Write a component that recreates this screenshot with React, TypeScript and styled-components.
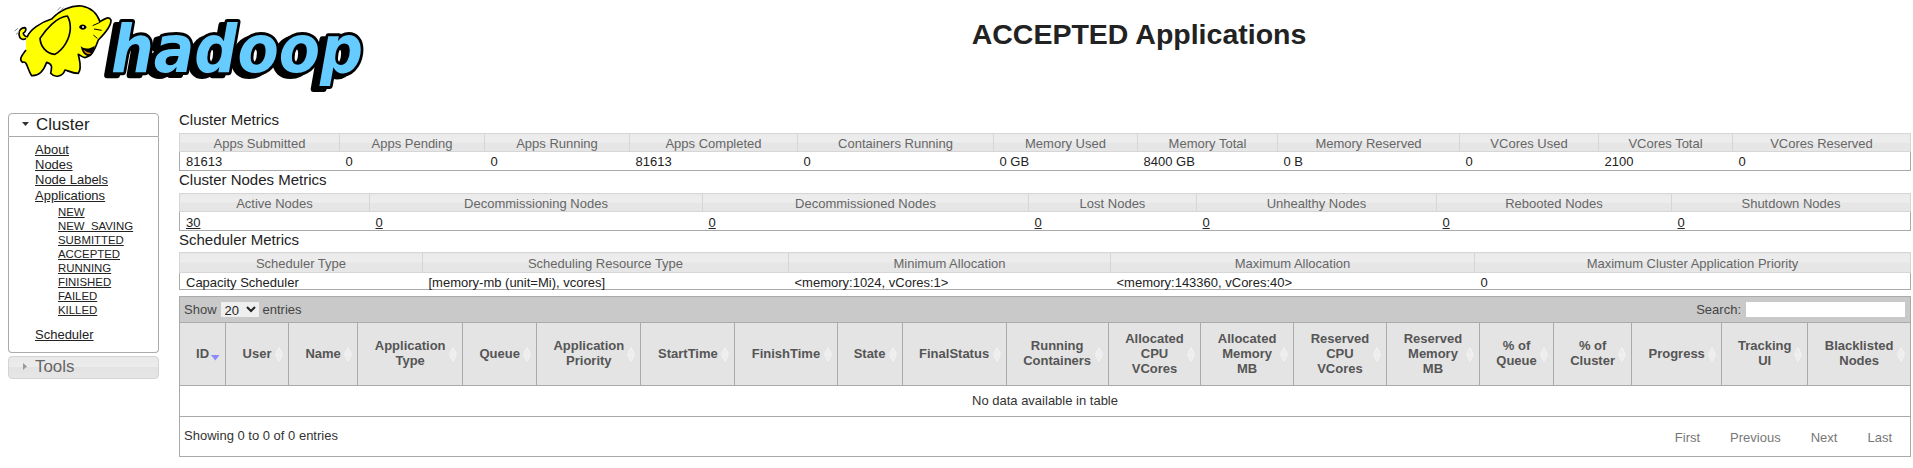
import React from 'react';
import styled, { createGlobalStyle } from 'styled-components';

const Global = createGlobalStyle`
  html, body { margin: 0; padding: 0; background: #fff; }
  body { font-family: "Liberation Sans", Arial, sans-serif; font-size: 13px; color: #222; }
  * { box-sizing: border-box; }
`;

const Page = styled.div`
  width: 1913px;
  height: 468px;
  overflow: hidden;
`;
const Header = styled.header`
  display: flex;
  height: 113px;
`;
const LogoBox = styled.div`
  flex: 0 0 365px;
  height: 100px;
`;
const Wordmark = styled.text`
  font-family: "DejaVu Sans", "Liberation Sans", sans-serif;
  font-weight: 700;
  font-style: italic;
  font-size: 66px;
  fill: #66ccff;
  stroke: #000;
  stroke-width: 6px;
  stroke-linejoin: round;
  paint-order: stroke;
  filter: drop-shadow(-6px 3px 0 #000);
`;
const Title = styled.h1`
  flex: 1;
  margin: 17px 0 0;
  height: 34px;
  line-height: 34px;
  text-align: center;
  font-size: 28.5px;
  font-weight: 700;
  color: #222;
`;
const Body = styled.div`
  display: flex;
  align-items: flex-start;
  padding: 0 3px 0 8px;
`;
const Side = styled.nav`
  flex: 0 0 151px;
  margin-right: 20px;
`;
const PanelHead = styled.div`
  display: flex;
  align-items: center;
  height: 24px;
  padding-bottom: 1px;
  border: 1px solid #aaa;
  border-radius: 4px 4px 0 0;
  font-size: 16.9px;
  color: #222;
  svg { margin: 0 6px 0 12px; }
`;
const PanelBody = styled.div`
  height: 216px;
  border: 1px solid #aaa;
  border-top: 0;
  border-radius: 0 0 4px 4px;
  padding: 5px 0 0 26px;
`;
const NavList = styled.ul`
  list-style: none;
  margin: 0;
  padding: 0;
`;
const NavItem = styled.li<{ $gap?: number }>`
  line-height: 15px;
  margin-top: ${p => p.$gap ?? 0}px;
`;
const NavLink = styled.a`
  color: #222;
  text-decoration: underline;
`;
const SubList = styled.ul`
  list-style: none;
  margin: 2px 0 0;
  padding: 0 0 0 23px;
`;
const SubItem = styled.li`
  font-size: 11.4px;
  line-height: 14px;
`;
const ToolsHead = styled.div`
  display: flex;
  align-items: center;
  height: 23px;
  margin-top: 3px;
  padding-bottom: 2px;
  border: 1px solid #d3d3d3;
  border-radius: 4px;
  background: linear-gradient(#e9e9e9 0, #ececec 50%, #e3e3e3 50%, #e6e6e6 100%);
  font-size: 16.9px;
  color: #666;
  svg { margin: 0 7px 0 14px; }
`;
const Main = styled.main`
  flex: 0 0 1731px;
`;
const SectionTitle = styled.h3<{ $h: number; $pad: number }>`
  margin: 0;
  height: ${p => p.$h}px;
  padding-bottom: ${p => p.$pad}px;
  display: flex;
  align-items: flex-end;
  font-size: 15px;
  font-weight: 400;
  line-height: 17px;
  color: #222;
`;
const InfoTable = styled.table`
  width: 100%;
  table-layout: fixed;
  border-collapse: collapse;
`;
const Col = styled.col<{ $w: number }>`
  width: ${p => p.$w}px;
`;
const InfoTh = styled.th<{ $h: number }>`
  height: ${p => p.$h}px;
  padding: 2px 0 0;
  border: 1px solid #d6d6d6;
  background: linear-gradient(#ebebeb 0, #ededed 50%, #e6e6e6 50%, #e6e6e6 100%);
  font-weight: 400;
  font-size: 13px;
  line-height: 15px;
  color: #666;
  text-align: center;
`;
const InfoRow = styled.tr`
  border-left: 1px solid #aaa;
  border-right: 1px solid #aaa;
  border-bottom: 1px solid #aaa;
`;
const InfoTd = styled.td<{ $h: number; $top: number }>`
  height: ${p => p.$h}px;
  padding: ${p => p.$top}px 6px 0;
  font-size: 13px;
  line-height: 13px;
  color: #222;
  white-space: nowrap;
`;
const CellLink = styled.a`
  color: #222;
  text-decoration: underline;
`;
const DataWrap = styled.section`
  margin-top: 6px;
  height: 161px;
  border: 1px solid #aaa;
  border-top: 0;
`;
const Toolbar = styled.div`
  display: flex;
  justify-content: space-between;
  align-items: center;
  height: 26px;
  padding: 0 5px 0 4px;
  background: #c9c9c9;
  border-top: 1px solid #aaa;
  color: #444;
`;
const Label = styled.label`
  display: flex;
  align-items: center;
`;
const PageSelect = styled.select`
  width: 38px;
  height: 15px;
  margin: 0 4px;
  padding: 0;
  border: 0;
  background: #efefef;
  font: 13px "Liberation Sans", Arial, sans-serif;
  color: #222;
`;
const SearchInput = styled.input`
  width: 159px;
  height: 15px;
  margin-left: 5px;
  padding: 0;
  border: 0;
  background: #fff;
`;
const DataTable = styled.table`
  width: 100%;
  table-layout: fixed;
  border-collapse: collapse;
`;
const DataTh = styled.th`
  position: relative;
  height: 63px;
  padding: 0 14px 2px;
  background: #e4e4e4;
  border: 1px solid #aaa;
  font-weight: 700;
  font-size: 13px;
  line-height: 15px;
  color: #555;
  text-align: center;
  &:first-child { border-left: 0; }
  &:last-child { border-right: 0; }
`;
const SortMark = styled.svg`
  position: absolute;
  right: 5px;
  top: 24px;
`;
const EmptyCell = styled.td`
  height: 31px;
  padding: 0 0 2px;
  border-bottom: 1px solid #aaa;
  text-align: center;
  color: #333;
  font-size: 13px;
`;
const Footer = styled.div`
  display: flex;
  justify-content: space-between;
  align-items: center;
  height: 39px;
  padding: 0 4px 2px;
  color: #333;
`;
const Pager = styled.div`
  display: flex;
  padding: 4px 14px 0 0;
`;
const PageLink = styled.a<{ $gap: number }>`
  margin-left: ${p => p.$gap}px;
  color: #777;
  text-decoration: none;
`;

const m1 = [160, 145, 145, 168, 196, 144, 140, 182, 139, 134, 178];
const m2 = [190, 333, 326, 168, 240, 235, 239];
const m3 = [243, 366, 322, 364, 436];
const m4 = [45.5, 63, 69, 105, 74, 104, 94, 102, 65, 104, 102, 92.5, 92.5, 93, 93, 74, 78, 90, 86, 102];

const clusterHead = ['Apps Submitted', 'Apps Pending', 'Apps Running', 'Apps Completed', 'Containers Running', 'Memory Used', 'Memory Total', 'Memory Reserved', 'VCores Used', 'VCores Total', 'VCores Reserved'];
const clusterVals = ['81613', '0', '0', '81613', '0', '0 GB', '8400 GB', '0 B', '0', '2100', '0'];
const nodeHead = ['Active Nodes', 'Decommissioning Nodes', 'Decommissioned Nodes', 'Lost Nodes', 'Unhealthy Nodes', 'Rebooted Nodes', 'Shutdown Nodes'];
const nodeVals = ['30', '0', '0', '0', '0', '0', '0'];
const schedHead = ['Scheduler Type', 'Scheduling Resource Type', 'Minimum Allocation', 'Maximum Allocation', 'Maximum Cluster Application Priority'];
const schedVals = ['Capacity Scheduler', '[memory-mb (unit=Mi), vcores]', '<memory:1024, vCores:1>', '<memory:143360, vCores:40>', '0'];
const dataHead = ['ID', 'User', 'Name', 'Application Type', 'Queue', 'Application Priority', 'StartTime', 'FinishTime', 'State', 'FinalStatus', 'Running Containers', 'Allocated CPU VCores', 'Allocated Memory MB', 'Reserved CPU VCores', 'Reserved Memory MB', '% of Queue', '% of Cluster', 'Progress', 'Tracking UI', 'Blacklisted Nodes'];
const subStates = ['NEW', 'NEW_SAVING', 'SUBMITTED', 'ACCEPTED', 'RUNNING', 'FINISHED', 'FAILED', 'KILLED'];

function Metrics({ cols, head, vals, link, headH, rowH, top }: { cols: number[]; head: string[]; vals: string[]; link?: boolean; headH: number; rowH: number; top: number }) {
  return (
    <InfoTable>
      <colgroup>{cols.map((w, i) => <Col key={i} $w={w} />)}</colgroup>
      <thead><tr>{head.map(h => <InfoTh key={h} $h={headH}>{h}</InfoTh>)}</tr></thead>
      <tbody>
        <InfoRow>
          {vals.map((v, i) => <InfoTd key={i} $h={rowH} $top={top}>{link ? <CellLink href="#">{v}</CellLink> : v}</InfoTd>)}
        </InfoRow>
      </tbody>
    </InfoTable>
  );
}

function Sort({ active }: { active?: boolean }) {
  if (active) {
    return (
      <SortMark width="9" height="15" viewBox="0 0 9 15">
        <path d="M0 8h8.500L4.250 13.500z" fill="#8a8aff" />
      </SortMark>
    );
  }
  return (
    <SortMark width="8" height="15" viewBox="0 0 8 15">
      <path d="M4 .5 7.500 7H.5z" fill="#ececec" stroke="#f8f8f8" strokeWidth=".6" />
      <path d="M.5 8h7L4 14.500z" fill="#ececec" stroke="#f8f8f8" strokeWidth=".6" />
    </SortMark>
  );
}

function Logo() {
  return (
    <svg width="365" height="100" viewBox="0 0 365 100" role="img" aria-label="hadoop">
      <Wordmark x="111" y="72" textLength="252" lengthAdjust="spacingAndGlyphs">hadoop</Wordmark>
      <g transform="translate(10 5) scale(.3333)">
        <path d="M48 100C38 108 28 100 27 88 26 76 34 68 44 68 50 70 48 80 40 85 40 90 46 95 52 95 60 75 90 52 125 42 150 15 185 0 215 3 245 8 262 28 270 50 285 40 298 33 303 45 304 60 285 85 265 105 257 125 250 152 225 158 215 156 210 150 205 148 208 165 217 190 205 205 185 205 170 195 165 195 158 215 135 220 122 205 125 190 130 178 110 172 102 195 90 214 65 212 52 195 52 165 38 172 28 165 30 158 48 135 48 100z" fill="#ffff00" stroke="#000" strokeWidth="5" strokeLinejoin="round" />
        <path d="M172 33C140 36 108 72 90 100 92 125 108 145 135 148 162 132 180 100 181 70 181 55 178 42 172 33z" fill="#ffff00" stroke="#000" strokeWidth="5" strokeLinejoin="round" />
        <path d="M212 124C216 142 226 156 240 154 250 148 252 136 254 122 240 132 226 134 212 124z" fill="#000" />
        <path d="M220 134C226 146 236 150 244 144 236 144 228 140 220 134z" fill="#ff9a00" />
        <path d="M207 66C212 56 224 56 230 66 226 76 212 78 207 66z" fill="#000" />
        <circle cx="219" cy="66" r="3" fill="#fff" />
        <path d="M248 62 270 52M252 72 275 76M250 90 262 100" stroke="#000" strokeWidth="3" fill="none" />
        <path d="M142 16 152 6M152 18 160 8M14 78 24 70M18 88 28 80" stroke="#888" strokeWidth="3" fill="none" />
      </g>
    </svg>
  );
}

export default function App() {
  return (
    <Page>
      <Global />
      <Header>
        <LogoBox><Logo /></LogoBox>
        <Title>ACCEPTED Applications</Title>
      </Header>
      <Body>
        <Side>
          <PanelHead>
            <svg width="9" height="5" viewBox="0 0 9 5"><path d="M1 0h7L4.500 4z" fill="#333" /></svg>
            Cluster
          </PanelHead>
          <PanelBody>
            <NavList>
              <NavItem><NavLink href="#">About</NavLink></NavItem>
              <NavItem><NavLink href="#">Nodes</NavLink></NavItem>
              <NavItem><NavLink href="#">Node Labels</NavLink></NavItem>
              <NavItem $gap={1}>
                <NavLink href="#">Applications</NavLink>
                <SubList>
                  {subStates.map(s => <SubItem key={s}><NavLink href="#">{s}</NavLink></SubItem>)}
                </SubList>
              </NavItem>
              <NavItem $gap={10}><NavLink href="#">Scheduler</NavLink></NavItem>
            </NavList>
          </PanelBody>
          <ToolsHead>
            <svg width="5" height="9" viewBox="0 0 5 9"><path d="M0 1v7l4-3.500z" fill="#999" /></svg>
            Tools
          </ToolsHead>
        </Side>
        <Main>
          <SectionTitle $h={20} $pad={5}>Cluster Metrics</SectionTitle>
          <Metrics cols={m1} head={clusterHead} vals={clusterVals} headH={18} rowH={19} top={1} />
          <SectionTitle $h={22} $pad={5}>Cluster Nodes Metrics</SectionTitle>
          <Metrics cols={m2} head={nodeHead} vals={nodeVals} link headH={18} rowH={19} top={2} />
          <SectionTitle $h={21} $pad={4}>Scheduler Metrics</SectionTitle>
          <Metrics cols={m3} head={schedHead} vals={schedVals} headH={20} rowH={16} top={3} />
          <DataWrap>
            <Toolbar>
              <Label>Show<PageSelect defaultValue="20"><option>20</option><option>50</option><option>100</option></PageSelect>entries</Label>
              <Label>Search:<SearchInput /></Label>
            </Toolbar>
            <DataTable>
              <colgroup>{m4.map((w, i) => <Col key={i} $w={w} />)}</colgroup>
              <thead>
                <tr>
                  {dataHead.map((h, i) => <DataTh key={h}>{h}<Sort active={i === 0} /></DataTh>)}
                </tr>
              </thead>
              <tbody>
                <tr><EmptyCell colSpan={20}>No data available in table</EmptyCell></tr>
              </tbody>
            </DataTable>
            <Footer>
              <span>Showing 0 to 0 of 0 entries</span>
              <Pager>
                <PageLink href="#" $gap={0}>First</PageLink>
                <PageLink href="#" $gap={30}>Previous</PageLink>
                <PageLink href="#" $gap={30}>Next</PageLink>
                <PageLink href="#" $gap={30}>Last</PageLink>
              </Pager>
            </Footer>
          </DataWrap>
        </Main>
      </Body>
    </Page>
  );
}
